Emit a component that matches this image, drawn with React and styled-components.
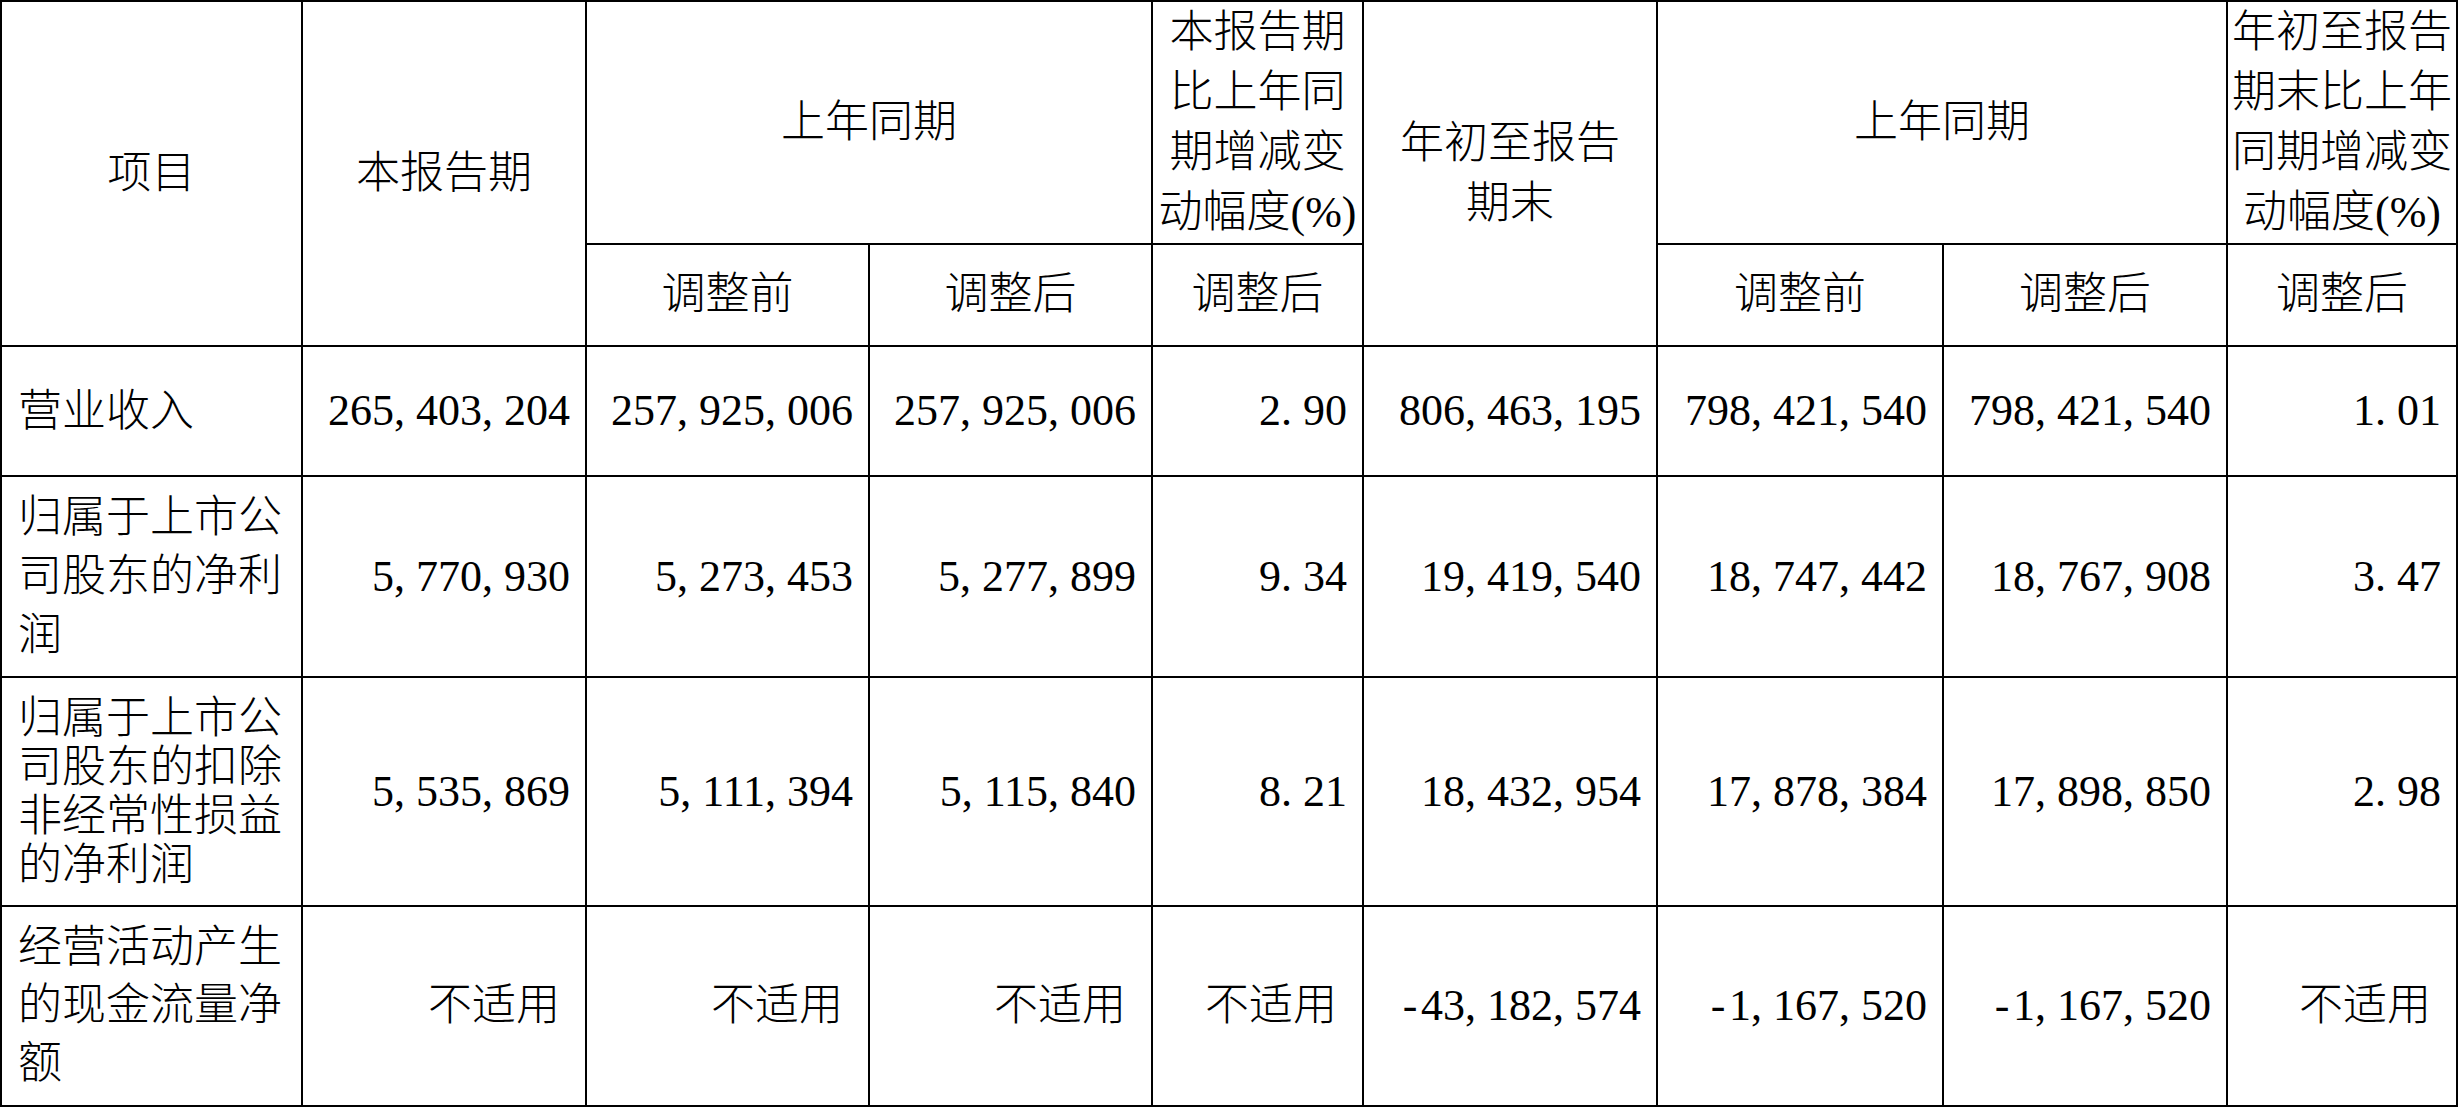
import React from "react";
import styled, { createGlobalStyle } from "styled-components";

const GlobalStyle = createGlobalStyle`
  html, body {
    margin: 0;
    padding: 0;
    background: #ffffff;
  }
  body {
    font-family: "Liberation Serif", "Noto Sans CJK SC", serif;
    color: #000000;
  }
`;

const Table = styled.table`
  width: 2458px;
  table-layout: fixed;
  border-collapse: collapse;
  font-size: 44px;
  font-weight: 300;
  color: #000;
`;

const HeadRow = styled.tr`
  height: ${(p) => p.$h}px;
`;

const Row = styled.tr`
  height: ${(p) => p.$h}px;
`;

const Th = styled.th`
  border: 2px solid #000;
  padding: 0;
  font-weight: 300;
  text-align: center;
  vertical-align: middle;
  line-height: 60px;
  white-space: nowrap;
`;

const Label = styled.td`
  border: 2px solid #000;
  padding: 0 14px 0 16px;
  text-align: left;
  vertical-align: middle;
  line-height: ${(p) => p.$lh}px;
`;

const Value = styled.td`
  border: 2px solid #000;
  padding: 0 ${(p) => (p.$na ? 25 : 15)}px 0 0;
  text-align: right;
  vertical-align: middle;
  white-space: nowrap;
  line-height: 50px;
`;

const Punct = styled.span`
  display: inline-block;
  width: 0.5em;
  text-align: ${(p) => (p.$minus ? "center" : "left")};
`;

const widths = [301, 284, 283, 283, 211, 294, 286, 284, 230];

const rows = [
  {
    label: "营业收入",
    h: 130,
    lh: 57,
    vals: ["265,403,204", "257,925,006", "257,925,006", "2.90", "806,463,195", "798,421,540", "798,421,540", "1.01"],
  },
  {
    label: "归属于上市公司股东的净利润",
    h: 201,
    lh: 59,
    vals: ["5,770,930", "5,273,453", "5,277,899", "9.34", "19,419,540", "18,747,442", "18,767,908", "3.47"],
  },
  {
    label: "归属于上市公司股东的扣除非经常性损益的净利润",
    h: 229,
    lh: 49,
    vals: ["5,535,869", "5,111,394", "5,115,840", "8.21", "18,432,954", "17,878,384", "17,898,850", "2.98"],
  },
  {
    label: "经营活动产生的现金流量净额",
    h: 200,
    lh: 58,
    vals: ["不适用", "不适用", "不适用", "不适用", "-43,182,574", "-1,167,520", "-1,167,520", "不适用"],
  },
];

const isNum = (v) => /[0-9]/.test(v);

// 数字按半角等宽排：逗号、小数点、负号各占半个字宽
const Num = ({ v }) =>
  v.split("").map((c, i) =>
    /[0-9]/.test(c) ? (
      c
    ) : (
      <Punct key={i} $minus={c === "-"}>
        {c}
      </Punct>
    )
  );

const App = () => {
  return (
    <>
      <GlobalStyle />
      <Table>
        <colgroup>
          {widths.map((w, i) => (
            <col key={i} style={{ width: w }} />
          ))}
        </colgroup>
        <thead>
          <HeadRow $h={243}>
            <Th rowSpan={2}>项目</Th>
            <Th rowSpan={2}>本报告期</Th>
            <Th colSpan={2}>上年同期</Th>
            <Th>
              本报告期
              <br />
              比上年同
              <br />
              期增减变
              <br />
              动幅度(%)
            </Th>
            <Th rowSpan={2}>
              年初至报告
              <br />
              期末
            </Th>
            <Th colSpan={2}>上年同期</Th>
            <Th>
              年初至报告
              <br />
              期末比上年
              <br />
              同期增减变
              <br />
              动幅度(%)
            </Th>
          </HeadRow>
          <HeadRow $h={102}>
            <Th>调整前</Th>
            <Th>调整后</Th>
            <Th>调整后</Th>
            <Th>调整前</Th>
            <Th>调整后</Th>
            <Th>调整后</Th>
          </HeadRow>
        </thead>
        <tbody>
          {rows.map((r) => (
            <Row key={r.label} $h={r.h}>
              <Label $lh={r.lh}>{r.label}</Label>
              {r.vals.map((v, i) => (
                <Value key={i} $na={!isNum(v)}>
                  {isNum(v) ? <Num v={v} /> : v}
                </Value>
              ))}
            </Row>
          ))}
        </tbody>
      </Table>
    </>
  );
};

export default App;
